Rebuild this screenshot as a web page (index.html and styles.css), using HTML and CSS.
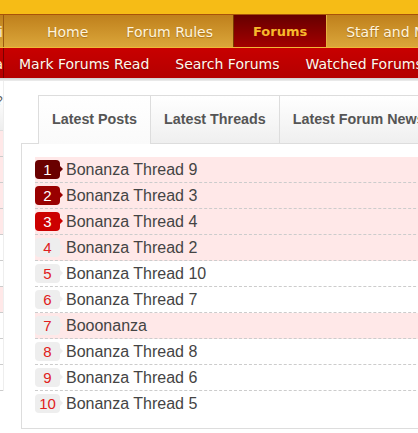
FILE: index.html
```html
<!DOCTYPE html>
<html lang="en">
<head>
    <meta charset="UTF-8">
    <meta name="viewport" content="width=device-width, initial-scale=1.0">
    <title>Forums</title>
    <link rel="stylesheet" href="styles.css">
</head>
<body>

<div class="topbar"></div>

<div class="navtabs">
    <span class="cut"><span>Wiki</span></span>
    <a class="tab first">Home</a>
    <a class="tab">Forum Rules</a>
    <a class="tab active">Forums</a>
    <a class="tab">Staff and Members</a>
</div>
<div class="subnav">
    <span class="cut"><span>Data</span></span>
    <a class="link first">Mark Forums Read</a>
    <a class="link">Search Forums</a>
    <a class="link">Watched Forums</a>
</div>
<div class="shadow"></div>

<div class="page">
    <!-- край соседнего блока, он уходит за левую границу -->
    <div class="side">
        <div class="side-head">?</div>
        <div class="side-row hl"></div>
        <div class="side-row hl"></div>
        <div class="side-row hl"></div>
        <div class="side-row hl"></div>
        <div class="side-row"></div>
        <div class="side-row"></div>
        <div class="side-row hl"></div>
        <div class="side-row"></div>
        <div class="side-row"></div>
        <div class="side-row"></div>
    </div>

    <div class="panel">
        <div class="panel-tabs">
            <span class="ptab active">Latest Posts</span>
            <span class="ptab">Latest Threads</span>
            <span class="ptab">Latest Forum News</span>
        </div>
        <div class="panel-body">
            <ol id="posts" class="posts"></ol>
        </div>
    </div>
</div>

<script>
    const posts = [
        { title: "Bonanza Thread 9", hot: true },
        { title: "Bonanza Thread 3", hot: true },
        { title: "Bonanza Thread 4", hot: true },
        { title: "Bonanza Thread 2", hot: true },
        { title: "Bonanza Thread 10", hot: false },
        { title: "Bonanza Thread 7", hot: false },
        { title: "Booonanza", hot: true },
        { title: "Bonanza Thread 8", hot: false },
        { title: "Bonanza Thread 6", hot: false },
        { title: "Bonanza Thread 5", hot: false }
    ];

    const list = document.getElementById("posts");
    posts.forEach((post, i) => {
        const li = document.createElement("li");
        li.className = "post" + (post.hot ? " hl" : "");

        const rank = document.createElement("span");
        rank.className = "rank rank-" + (i < 3 ? i + 1 : "n");
        rank.textContent = i + 1;

        const title = document.createElement("a");
        title.className = "title";
        title.textContent = post.title;

        li.appendChild(rank);
        li.appendChild(title);
        list.appendChild(li);
    });
</script>

</body>
</html>
```

FILE: styles.css
```css
body {
    margin: 0;
    background: #fff;
    overflow: hidden;
    font-family: "Liberation Sans", Arial, sans-serif;
}
a {
    text-decoration: none;
    cursor: pointer;
}

/* верхняя полоса */
.topbar {
    height: 14px;
    background: #f6bc16;
}

/* главное меню */
.navtabs {
    display: flex;
    height: 32px;
    border-top: 1px solid #a8520a;
    background: linear-gradient(#bf801c, #dba63a);
    font-family: "DejaVu Sans", Verdana, sans-serif;
    font-size: 14px;
    white-space: nowrap;
}
.navtabs > *,
.subnav > * {
    flex-shrink: 0;
}
.cut {
    width: 3px;
    display: flex;
    justify-content: flex-end;
    overflow: hidden;
    border-right: 1px solid #9a5a10;
    color: #fff0d0;
    line-height: 34px;
}
.subnav .cut {
    line-height: 32px;
    border-right-color: #7a0000;
}
.tab {
    padding: 0 19px;
    line-height: 34px;
    color: #fff4dc;
    text-shadow: 0 1px 1px rgba(90, 40, 0, 0.35);
}
.tab.first {
    margin-left: 24px;
}
.tab.active {
    background: linear-gradient(#660000, #a30000);
    border-left: 1px solid #7a3a00;
    border-right: 1px solid #e6b040;
    margin-left: 1px;
    color: #f7b92c;
    font-weight: bold;
    font-size: 13px;
    text-shadow: none;
}

/* подменю */
.subnav {
    display: flex;
    height: 30px;
    border-top: 1px solid #f0b838;
    background: linear-gradient(#c80000, #b40000);
    font-family: "DejaVu Sans", Verdana, sans-serif;
    font-size: 14px;
    white-space: nowrap;
}
.link {
    padding: 0 13px;
    line-height: 32px;
    color: #fff8ec;
    text-shadow: 0 1px 1px rgba(80, 0, 0, 0.5);
}
.link.first {
    margin-left: 2px;
}
.shadow {
    height: 3px;
    background: linear-gradient(#d0d0d0, #eee);
}

/* основная часть */
.page {
    display: flex;
    align-items: flex-start;
}
.side {
    width: 3px;
    flex-shrink: 0;
    padding-top: 13px;
    border-right: 1px solid #eee;
    overflow: hidden;
}
.side-head {
    height: 36px;
    font-size: 12px;
    color: #555;
    background: linear-gradient(#fff, #eee);
    border-bottom: 1px solid #ddd;
    text-indent: -4px;
}
.side-row {
    height: 25px;
    border-bottom: 1px dashed #ccc;
}
.side-row.hl {
    background: #ffe8e8;
}

.panel {
    margin: 14px 0 0 17px;
    min-width: 420px;
}
.panel-tabs {
    display: flex;
    padding-left: 17px;
    white-space: nowrap;
}
.ptab {
    height: 47px;
    padding: 0 13px;
    line-height: 46px;
    border: 1px solid #ddd;
    border-left: none;
    border-bottom: none;
    background: linear-gradient(#fff, #efefef);
    color: #555;
    font-size: 14.3px;
    font-weight: bold;
}
.ptab.active {
    border-left: 1px solid #ddd;
    background: linear-gradient(#fff, #fafafa);
    height: 48px;
    margin-bottom: -1px;
    position: relative;
}
.panel-body {
    border-top: 1px solid #ddd;
    border-left: 1px solid #ddd;
    border-bottom: 1px solid #ddd;
    padding: 13px 0 12px 13px;
}

/* список последних сообщений */
.posts {
    list-style: none;
    margin: 0;
    padding: 0;
}
.post {
    display: flex;
    align-items: center;
    height: 25px;
    border-bottom: 1px dashed #ccc;
}
.post:last-child {
    border-bottom: none;
}
.post.hl {
    background: #ffe8e8;
}
.rank {
    position: relative;
    width: 25px;
    height: 19px;
    margin-right: 6px;
    border-radius: 4px;
    background: #eee;
    color: #e02020;
    font-size: 15px;
    line-height: 19px;
    text-align: center;
}
/* стрелочка справа от номера */
.rank::after {
    content: "";
    position: absolute;
    right: -3px;
    top: 6px;
    border-left: 3px solid #eee;
    border-top: 3px solid transparent;
    border-bottom: 3px solid transparent;
}
.rank-1 { background: #690000; color: #fff; }
.rank-2 { background: #990000; color: #fff; }
.rank-3 { background: #cc0000; color: #fff; }
.rank-1::after { border-left-color: #690000; }
.rank-2::after { border-left-color: #990000; }
.rank-3::after { border-left-color: #cc0000; }
.title {
    color: #444;
    font-size: 16px;
}
```
